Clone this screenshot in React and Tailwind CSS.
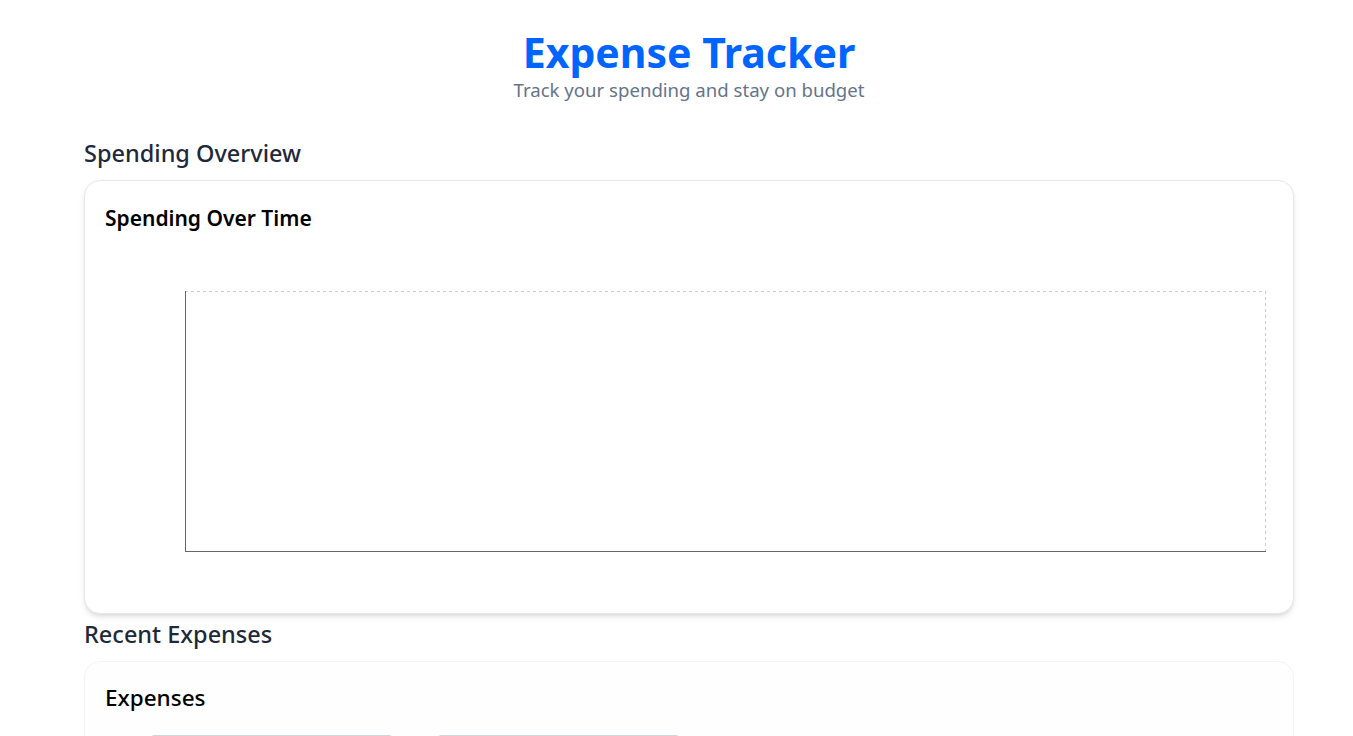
const font = { fontFamily: '"Noto Sans", "Open Sans", sans-serif' };

const SpendingChart = () => (
    <div className="ml-[80px] mr-[7px] mt-[56px]">
        <svg className="block w-full h-[261px]">
            <line x1="0" y1="0.5" x2="100%" y2="0.5" stroke="#cccccc" strokeDasharray="3 3" />
            <line x1="100%" y1="0" x2="100%" y2="100%" stroke="#cccccc" strokeDasharray="3 3" transform="translate(-0.5,0)" />
            <line x1="0.5" y1="0" x2="0.5" y2="100%" stroke="#666" />
            <line x1="0" y1="260.5" x2="100%" y2="260.5" stroke="#666" />
        </svg>
        <div className="h-[41px]" />
    </div>
);

const App = () => {
    return (
        <div className="min-h-screen bg-white pl-[84px] pr-[59px]" style={font}>
            <header className="text-center pt-[30px]">
                <h1 className="text-[41px] leading-[44px] font-bold text-[#0064ff]">Expense Tracker</h1>
                <p className="mt-[4px] text-[18.6px] leading-[24px] text-[#64748b]">Track your spending and stay on budget</p>
            </header>

            <h2 className="mt-[36px] text-[23.5px] leading-[30px] font-medium text-[#1e293b]">Spending Overview</h2>
            <div className="mt-[12px] rounded-2xl border border-gray-200 shadow-md bg-white p-5">
                <h3 className="text-[21px] leading-[34px] font-semibold text-black">Spending Over Time</h3>
                <SpendingChart />
            </div>

            <h2 className="mt-[5px] text-[23.5px] leading-[30px] font-medium text-[#1e293b]">Recent Expenses</h2>
            <div className="mt-[12px] rounded-2xl border border-gray-100 bg-[#fefefe] p-5">
                <h3 className="text-[22.5px] leading-[32px] font-medium text-black">Expenses</h3>
                <div className="mt-[21px] ml-[45px] flex gap-[44px]">
                    <div className="w-[243px] h-[38px] rounded border border-gray-300" />
                    <div className="w-[243px] h-[38px] rounded border border-gray-300" />
                </div>
            </div>
        </div>
    );
};

export default App;
